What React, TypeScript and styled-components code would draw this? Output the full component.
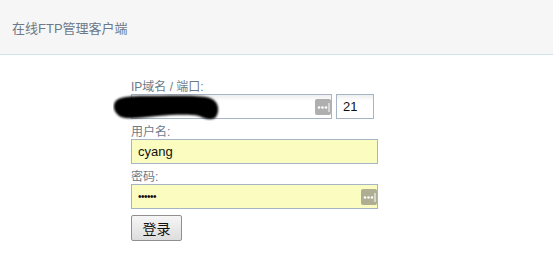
import styled, { createGlobalStyle } from "styled-components";

const GlobalStyle = createGlobalStyle`
  html, body {
    margin: 0;
    padding: 0;
    background: #fff;
    font-family: "Liberation Sans", Arial, "Noto Sans CJK SC", sans-serif;
  }
`;

const DotsIcon = () => (
  <Dots>
    <svg width="16" height="16" viewBox="0 0 16 16">
      <rect x="0" y="0" width="16" height="16" rx="2" fill="currentColor" />
      <circle cx="4" cy="8.5" r="1.3" fill="#fff" />
      <circle cx="7.5" cy="8.5" r="1.3" fill="#fff" />
      <circle cx="11" cy="8.5" r="1.3" fill="#fff" />
      <rect x="13.5" y="4" width="1" height="9" fill="#fff" />
    </svg>
  </Dots>
);

const Redaction = () => (
  <Scribble width="110" height="30" viewBox="0 0 110 30">
    <defs>
      <filter id="blur" x="-20%" y="-40%" width="140%" height="180%">
        <feGaussianBlur stdDeviation="1.2" />
      </filter>
    </defs>
    <path
      d="M2 8 C6 1 25 2 45 2 C65 2 86 1 97 4 C106 7 107 17 103 23 C99 27 92 25 86 22 C75 20 60 21 45 22 C30 23 16 26 8 23 C2 20 -1 13 2 8 Z"
      fill="#000"
      filter="url(#blur)"
    />
  </Scribble>
);

const App = () => (
  <>
    <GlobalStyle />
    <Header>
      <Title>在线FTP管理客户端</Title>
    </Header>
    <Form>
      <Label>IP域名 / 端口:</Label>
      <Row>
        <Field $width={201}>
          <Input $width={201} defaultValue="" />
          <DotsIcon />
          <Redaction />
        </Field>
        <Input $width={38} defaultValue="21" />
      </Row>
      <Label $top={6}>用户名:</Label>
      <Input $width={247} $fill defaultValue="cyang" />
      <Label $top={6}>密码:</Label>
      <Field $width={247}>
        <Input $width={247} $fill $secret type="password" defaultValue="123456" />
        <DotsIcon />
      </Field>
      <Button type="button">登录</Button>
    </Form>
  </>
);

export default App;

const Header = styled.div`
  height: 54px;
  background: #f6f6f6;
  border-bottom: 1px solid #d3e3e6;
  display: flex;
  align-items: center;
  padding-left: 12px;
`;

const Title = styled.span`
  font-size: 13px;
  color: #6b7988;
  padding-top: 1px;
`;

const Form = styled.div`
  display: flex;
  flex-direction: column;
  align-items: flex-start;
  padding: 25px 0 0 131px;
`;

const Label = styled.div<{ $top?: number }>`
  font-size: 12px;
  line-height: 14px;
  height: 14px;
  color: #6c7a8a;
  margin-top: ${({ $top }) => $top ?? 0}px;
`;

const Row = styled.div`
  display: flex;
  gap: 4px;
`;

const Field = styled.div<{ $width: number }>`
  position: relative;
  width: ${({ $width }) => $width}px;
  height: 25px;
`;

const Input = styled.input<{ $width: number; $fill?: boolean; $secret?: boolean }>`
  box-sizing: border-box;
  width: ${({ $width }) => $width}px;
  height: 25px;
  margin: 0;
  padding: 0 6px;
  border: 1px solid #a6b5c6;
  border-radius: 0;
  outline: none;
  font-family: "Liberation Sans", Arial, sans-serif;
  font-size: ${({ $secret }) => ($secret ? "10px" : "13px")};
  letter-spacing: ${({ $secret }) => ($secret ? "-0.5px" : "0")};
  color: #111;
  background: ${({ $fill }) =>
    $fill ? "#fafdbf" : "linear-gradient(#eeeeee, #ffffff 6px)"};
`;

const Dots = styled.span`
  position: absolute;
  right: 1px;
  top: 5px;
  width: 16px;
  height: 16px;
  color: rgba(110, 110, 110, 0.55);
  svg {
    display: block;
  }
`;

const Scribble = styled.svg`
  position: absolute;
  left: -18px;
  top: 0;
  pointer-events: none;
`;

const Button = styled.button`
  margin-top: 6px;
  width: 51px;
  height: 26px;
  padding: 0;
  border: 1px solid #8f8f8f;
  border-radius: 2px;
  background: linear-gradient(#f6f6f6, #dddddd);
  font-family: "Noto Sans CJK SC", sans-serif;
  font-size: 14px;
  color: #111;
`;
